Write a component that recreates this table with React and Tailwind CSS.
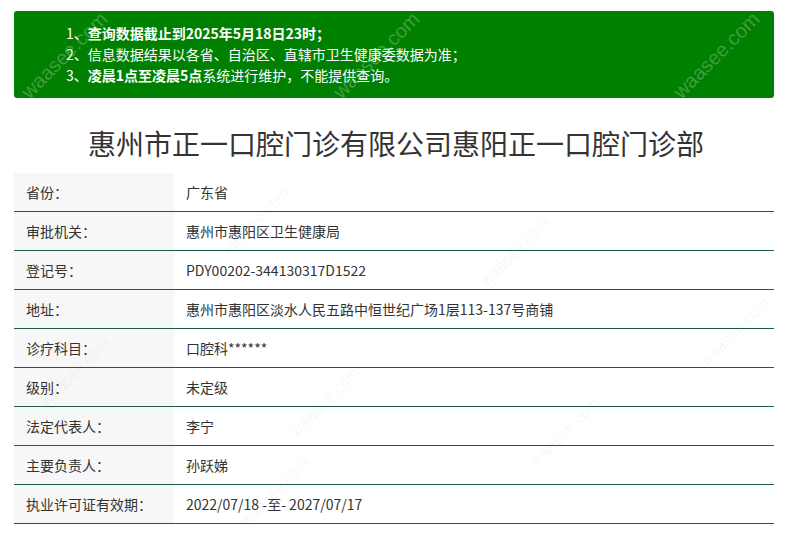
import React from "react";

const rows = [
   ["省份：", "广东省"],
   ["审批机关：", "惠州市惠阳区卫生健康局"],
   ["登记号：", "PDY00202-344130317D1522"],
   ["地址：", "惠州市惠阳区淡水人民五路中恒世纪广场1层113-137号商铺"],
   ["诊疗科目：", "口腔科******"],
   ["级别：", "未定级"],
   ["法定代表人：", "李宁"],
   ["主要负责人：", "孙跃娣"],
   ["执业许可证有效期：", "2022/07/18 -至- 2027/07/17"],
];

const marks = [
   { x: 8, y: 40, light: true },
   { x: 320, y: 40, light: true },
   { x: 660, y: 40, light: true },
   { x: 210, y: 210, light: false },
   { x: 470, y: 240, light: false },
   { x: 690, y: 320, light: false },
   { x: 30, y: 360, light: false },
   { x: 280, y: 390, light: false },
   { x: 520, y: 420, light: false },
   { x: 230, y: 480, light: false },
];

const App = () => {
   return (
      <div
         className="relative w-[792px] h-[534px] overflow-hidden bg-white text-[#333]"
         style={{ fontFamily: '"Noto Sans CJK SC", "Noto Sans", sans-serif' }}
      >
         <div className="px-[14px] pt-[11px]">
            {/* Notice */}
            <div className="h-[87px] w-[760px] rounded-[3px] bg-[#008000] pl-[52px] pt-[12px] text-[14px] leading-[21px] text-white">
               <p className="font-bold">
                  <span className="font-normal">1、</span>查询数据截止到2025年5月18日23时；
               </p>
               <p>2、信息数据结果以各省、自治区、直辖市卫生健康委数据为准；</p>
               <p>
                  3、<span className="font-bold">凌晨1点至凌晨5点</span>系统进行维护，不能提供查询。
               </p>
            </div>

            {/* Title */}
            <h1 className="mt-[25px] text-center text-[28px] leading-[40px] text-[#333]">
               惠州市正一口腔门诊有限公司惠阳正一口腔门诊部
            </h1>

            {/* Table */}
            <div className="mt-[10px] w-[760px]">
               {rows.map(([label, value]) => (
                  <div
                     key={label}
                     className="flex h-[39px] border-b border-[#1d5b3a] text-[14px]"
                  >
                     <div className="flex w-[160px] items-center bg-[#f7f7f7] pl-[12px]">
                        {label}
                     </div>
                     <div className="flex items-center pl-[12px]">{value}</div>
                  </div>
               ))}
            </div>
         </div>

         {/* Watermarks */}
         {marks.map((m, i) => (
            <div
               key={i}
               className={`pointer-events-none absolute -rotate-45 select-none ${
                  m.light ? "text-[20px] text-white/25" : "text-[16px] text-black/[0.05]"
               }`}
               style={{ left: m.x, top: m.y, fontFamily: "Arial, sans-serif" }}
            >
               waasee.com
            </div>
         ))}
      </div>
   );
};

export default App;
